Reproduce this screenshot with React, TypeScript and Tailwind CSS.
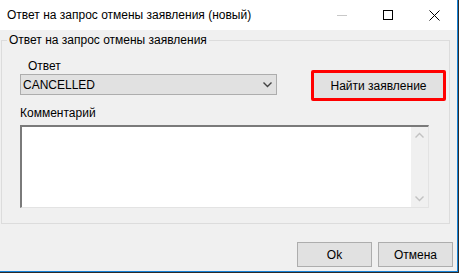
import React from 'react';

const font = {fontFamily: '"Liberation Sans", "Noto Sans", sans-serif'};

function Chevron({up}: {up?: boolean}) {
    return (
        <svg width="9" height="6" viewBox="0 0 9 6" className="block">
            <path d={up ? 'M0.5 5.5 L4.5 1.5 L8.5 5.5' : 'M0.5 0.5 L4.5 4.5 L8.5 0.5'} fill="none" stroke="currentColor" strokeWidth="1.4"/>
        </svg>
    );
}

function TitleBar() {
    return (
        <div className="h-[30px] bg-white flex items-center shrink-0">
            <span className="pl-[7px] text-[12px] text-black leading-none">Ответ на запрос отмены заявления (новый)</span>
            <div className="ml-auto flex items-center h-full">
                <div className="w-[46px] h-full flex items-center justify-center">
                    <div className="w-[10px] h-px bg-[#c8c8c8]"/>
                </div>
                <div className="w-[46px] h-full flex items-center justify-center">
                    <div className="w-[10px] h-[10px] border border-black"/>
                </div>
                <div className="w-[46px] h-full flex items-center justify-center">
                    <svg width="11" height="11" viewBox="0 0 11 11">
                        <path d="M0.5 0.5 L10.5 10.5 M10.5 0.5 L0.5 10.5" stroke="#000" strokeWidth="1"/>
                    </svg>
                </div>
            </div>
        </div>
    );
}

function WinButton({children, className}: {children: React.ReactNode; className?: string}) {
    return (
        <div className={"h-[25px] bg-[#e1e1e1] border border-[#adadad] flex items-center justify-center " + (className ?? '')}>
            {children}
        </div>
    );
}

export default function App() {
    return (
        <div className="w-[459px] h-[273px] bg-[#2b2b2b] overflow-hidden" style={font}>
            <div className="w-[458px] h-[272px] bg-[#f0f0f0] border-r border-b border-[#1883d7] flex flex-col text-[12px] text-black">
                <TitleBar/>

                {/* group box */}
                <div className="relative mt-[10px] ml-[1px] w-[449px] h-[184px] border border-[#dcdcdc] pt-[18px] pl-[18px] shrink-0">
                    <span className="absolute -top-[8px] left-[5px] px-[2px] bg-[#f0f0f0] leading-[14px]">Ответ на запрос отмены заявления</span>

                    <div className="flex items-start">
                        <div className="w-[257px]">
                            <div className="pl-[8px] h-[14px] leading-[14px]">Ответ</div>
                            <div className="mt-[1px] h-[21px] bg-[#e1e1e1] border border-[#adadad] flex items-center pl-[2px] pr-[4px]">
                                <span className="leading-none">CANCELLED</span>
                                <span className="ml-auto text-[#444]"><Chevron/></span>
                            </div>
                        </div>
                        <div className="ml-[34px] mt-[11px] w-[135px] h-[31px] border-[3px] border-[#ff0000] rounded-[2px] bg-[#e1e1e1] flex items-center justify-center">
                            <span className="leading-none">Найти заявление</span>
                        </div>
                    </div>

                    <div className="mt-[5px] h-[14px] leading-[14px]">Комментарий</div>
                    <div className="mt-[5px] w-[409px] h-[83px] bg-white border-l-2 border-t-2 border-l-[#7a7a7a] border-t-[#7a7a7a] border-r border-b border-r-[#e3e3e3] border-b-[#e3e3e3] flex">
                        <div className="flex-1"/>
                        <div className="w-[17px] bg-[#f0f0f0] flex flex-col items-center justify-between py-[5px] text-[#c2c2c2]">
                            <Chevron up/>
                            <Chevron/>
                        </div>
                    </div>
                </div>

                <div className="flex justify-end gap-[6px] mt-[18px] pr-[4px]">
                    <WinButton className="w-[75px]">Ok</WinButton>
                    <WinButton className="w-[75px]">Отмена</WinButton>
                </div>
            </div>
        </div>
    );
}
